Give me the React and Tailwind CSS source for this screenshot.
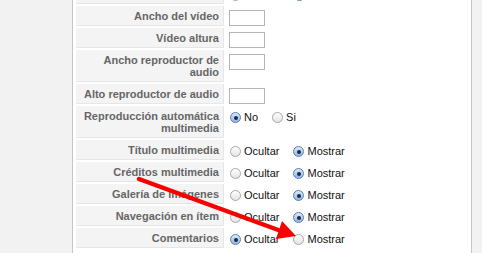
import React from 'react';

const rows = [
  { label: '', type: 'radio', options: ['', ''], value: 1 },
  { label: 'Ancho del vídeo', type: 'input' },
  { label: 'Vídeo altura', type: 'input' },
  { label: 'Ancho reproductor de audio', type: 'input', tall: true },
  { label: 'Alto reproductor de audio', type: 'input' },
  { label: 'Reproducción automática multimedia', type: 'radio', options: ['No', 'Si'], value: 0 },
  { label: 'Título multimedia', type: 'radio', options: ['Ocultar', 'Mostrar'], value: 1 },
  { label: 'Créditos multimedia', type: 'radio', options: ['Ocultar', 'Mostrar'], value: 1 },
  { label: 'Galería de imágenes', type: 'radio', options: ['Ocultar', 'Mostrar'], value: 1 },
  { label: 'Navegación en ítem', type: 'radio', options: ['Ocultar', 'Mostrar'], value: 1 },
  { label: 'Comentarios', type: 'radio', options: ['Ocultar', 'Mostrar'], value: 0 },
];

function Radio({ checked }) {
  return (
    <span
      className={`relative mt-[2px] flex h-[11px] w-[11px] shrink-0 items-center justify-center rounded-full border ${
        checked
          ? 'border-[#5a7fae] bg-gradient-to-b from-[#d9e9fb] to-[#8fb6e6]'
          : 'border-[#a7a7a7] bg-gradient-to-b from-[#ffffff] to-[#e3e3e3]'
      }`}
    >
      {checked && <span className="h-[4px] w-[4px] rounded-full bg-[#1c2a3c]" />}
    </span>
  );
}

function Row({ row, first }) {
  return (
    <div className={`flex ${first ? 'h-[20px]' : ''}`}>
      <div className="w-[148px] shrink-0 border-b border-r border-[#e6e6e6] bg-[#f4f4f4] pb-[3px] pr-[4px] pt-[4px] text-right text-[11px] font-bold leading-[12px] text-[#666666]">
        {row.label}
      </div>
      <div className="ml-[3px] flex pl-[2px] pt-[4px]">
        {row.type === 'input' ? (
          <div className="h-[16px] w-[36px] border border-[#b4b4b4] bg-white" />
        ) : (
          <div className="flex items-start text-[11px] leading-[14px] text-[#111]">
            {row.options.map((o, i) => (
              <label key={i} className={`flex items-start ${i > 0 ? (first ? 'ml-[53px]' : 'ml-[14px]') : 'ml-[1px]'}`}>
                <Radio checked={row.value === i} />
                {o && <span className="ml-[3px]">{o}</span>}
              </label>
            ))}
          </div>
        )}
      </div>
    </div>
  );
}

export default function App() {
  return (
    <div
      className="relative flex h-[253px] w-[482px] overflow-hidden bg-[#f2f2f2]"
      style={{ fontFamily: '"Liberation Sans", Arial, sans-serif' }}
    >
      <div className="w-[72px] shrink-0" />
      <div className="w-[400px] shrink-0 border-x border-[#c4c4c4] bg-white pl-[3px]">
        <div className="-mt-[16px] flex flex-col gap-[2px]">
          {rows.map((r, i) => (
            <Row key={i} row={r} first={i === 0} />
          ))}
        </div>
      </div>

      <svg className="pointer-events-none absolute left-0 top-0" width="482" height="253">
        <line x1="139" y1="179" x2="281" y2="231" stroke="#f80000" strokeWidth="4.5" strokeLinecap="round" />
        <polygon points="296,236 282,221 276,239" fill="#f80000" />
      </svg>
    </div>
  );
}
